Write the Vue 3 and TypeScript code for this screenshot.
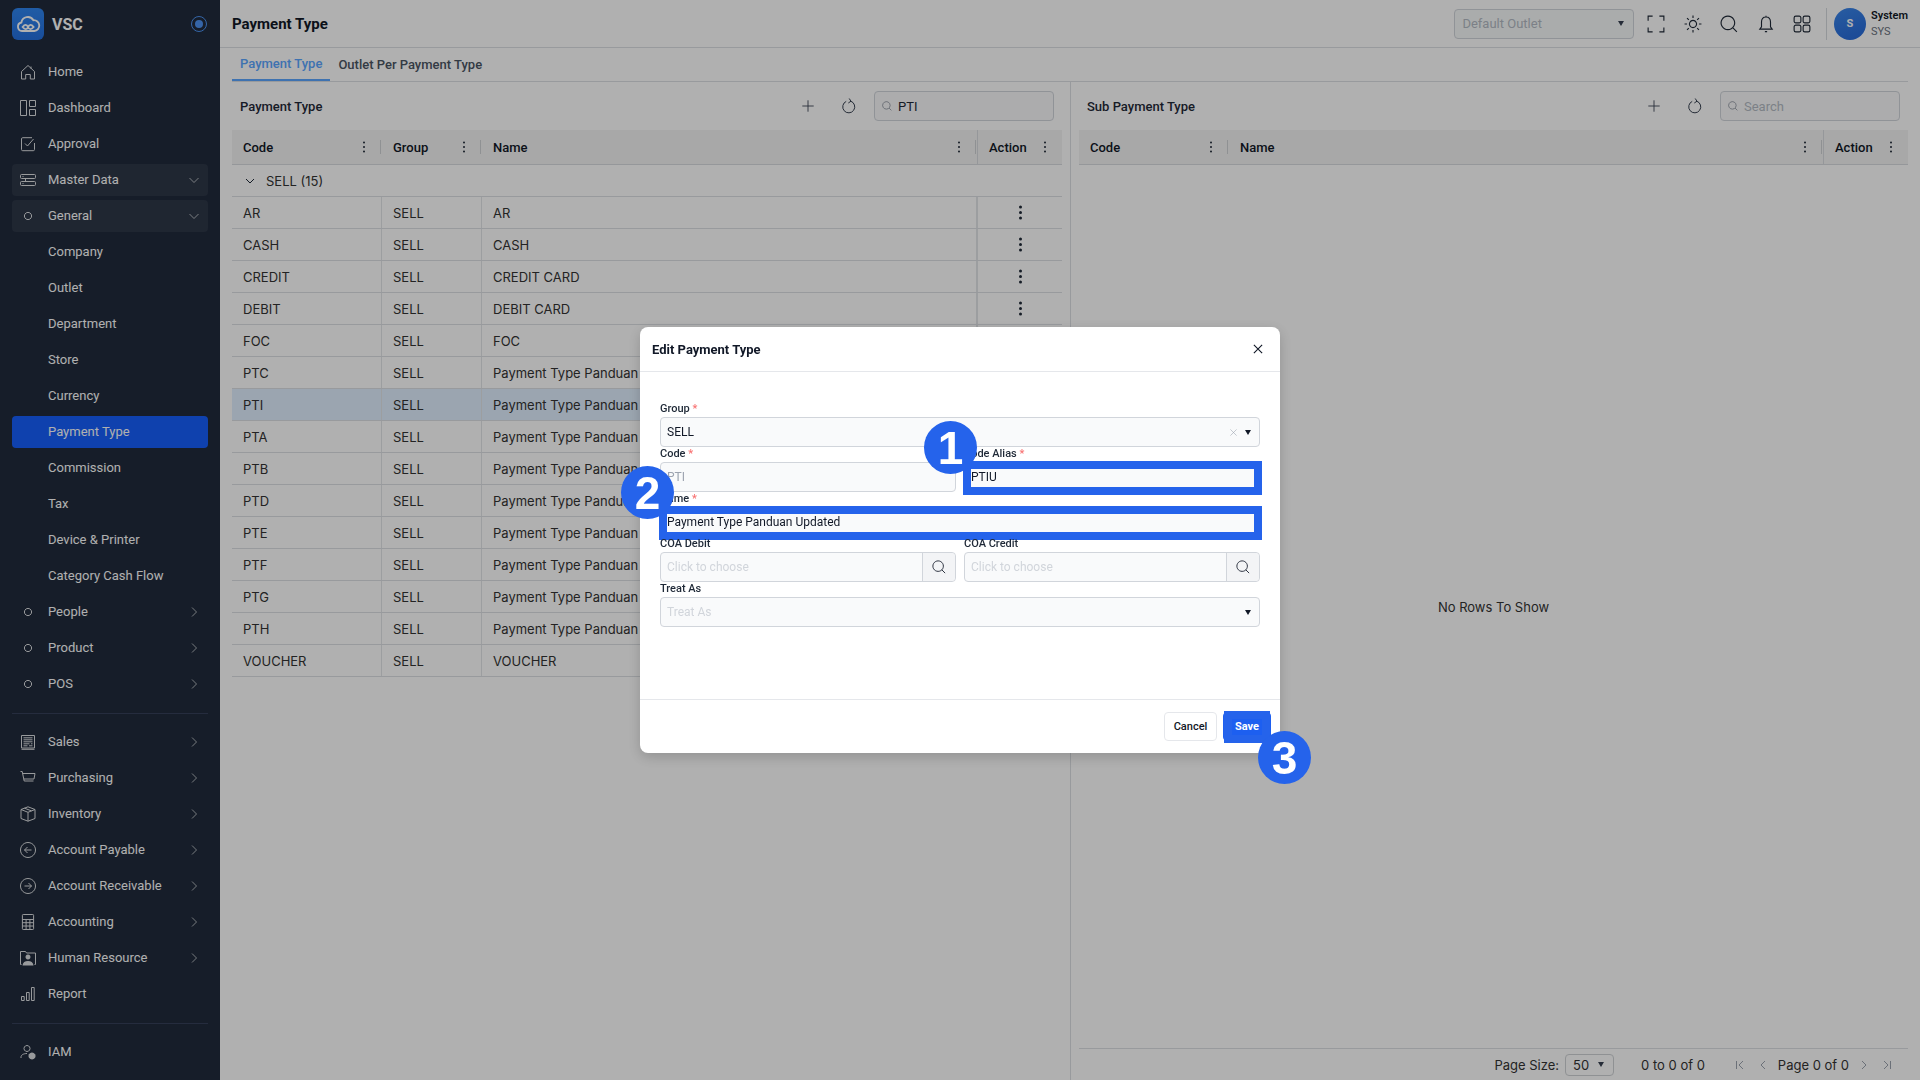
<script setup lang="ts">
type Icon = { d: string; f?: string }

const icons: Record<string, Icon> = {
  home: { d: 'M1.5 15V7.5L8 1.5l6.5 6V15h-4.2v-4.5H5.7V15zM11 2.5v2.2' },
  dashboard: { d: 'M.5.5h6v15h-6zM9.5.5h6v6h-6zM9.5 9.5h6v6h-6z' },
  approval: { d: 'M14.5 7v6.5a1.2 1.2 0 0 1-1.2 1.2H2.7a1.2 1.2 0 0 1-1.2-1.2V2.9a1.2 1.2 0 0 1 1.2-1.2H12M5 7.5l2.5 2.5L13.5 3' },
  server: { d: 'M1.5 2.500h13a1 1 0 0 1 1 1v2a1 1 0 0 1-1 1h-13a1 1 0 0 1-1-1v-2a1 1 0 0 1 1-1zM1.500 9.500h13a1 1 0 0 1 1 1v2a1 1 0 0 1-1 1h-13a1 1 0 0 1-1-1v-2a1 1 0 0 1 1-1zM2.500 4.500h1M2.500 11.500h1M5.500 6.500v3' },
  dot: { d: 'M8 4.400a3.600 3.600 0 1 0 .01 0z' },
  sales: { d: 'M1.500 1.500h13v12.500h-13zM1.500 15.300h13M3.500 3.800h9M3.500 5.800h9M3.500 7.800h9M3.500 9.800h6M11 9.800h1.500M3.500 11.800h4M9 11.800h3.500' },
  cart: { d: 'M.5 1.500h1.700l2 9.500h9.300M2.600 3.500h12.400l-1 5.500H3.800' , f: '' },
  box: { d: 'M8 .8l7 2.700v9L8 15.200l-7-2.700v-9zM1 3.500l7 2.800 7-2.800M8 6.300v8.900M4.500 2.200l7 2.700' },
  back: { d: 'M8 .5a7.500 7.500 0 1 0 .01 0zM11.500 8h-7M7.500 5L4.500 8l3 3' },
  forward: { d: 'M8 .5a7.500 7.500 0 1 0 .01 0zM4.500 8h7M8.500 5l3 3-3 3' },
  calc: { d: 'M3.200.5h9.600a.8.800 0 0 1 .8.800v13.400a.8.800 0 0 1-.8.800H3.200a.8.800 0 0 1-.8-.8V1.300a.8.800 0 0 1 .8-.8zM2.400 5.500h11.200M2.400 8.700h11.200M2.400 12h11.200M6.100 5.500v10M9.900 5.500v10' },
  person: {
    d: 'M.5 14.500V1.500h5l1 1.500h9v11.500M.5 14.500h1M15.500 14.500h-1',
    f: 'M8 4.600a2.500 2.500 0 1 1-.01 0zM2.500 15.500c.3-3.200 2.500-4.500 5.500-4.500s5.200 1.300 5.500 4.500z',
  },
  report: { d: 'M1.500 10.500h2.700v4H1.500zM6.500 6.500h2.700v8H6.500zM11.500 1.500h2.700v13h-2.700z' },
  iam: {
    d: 'M7 1.500a3 3 0 1 0 .01 0zM1 14v-1c0-2 2.500-3.500 6-3.500',
    f: 'M12 8.500a3.500 3.500 0 1 0 .01 0z',
  },
  tools: { d: 'M1 1l6 6M15 1L9 7M3 0v3H0' },
  plus: { d: 'M8 1.500v13M1.500 8h13' },
  refresh: { d: 'M9.800 3.200A6 6 0 1 1 5.200 3.400M8.200 .5l1.800 2.700-2.700 1.800' },
  search: { d: 'M7 1a6 6 0 1 0 .01 0zM11.300 11.300L15 15' },
  full: { d: 'M1 5V1h4M11 1h4v4M15 11v4h-4M5 15H1v-4' },
  sun: { d: 'M8 4.800a3.200 3.200 0 1 0 .01 0zM8 .5v2.200M8 13.300v2.200M.5 8h2.200M13.300 8h2.200M2.700 2.700l1.600 1.600M11.700 11.700l1.600 1.600M2.700 13.300l1.600-1.600M11.700 4.300l1.600-1.600' },
  bell: { d: 'M8 1.800c-2.700 0-4 2-4 4.500v4.200l-1.500 2h11l-1.500-2V6.300c0-2.500-1.300-4.500-4-4.500zM8 .6v1.200M7 14.800h2' },
  grid: { d: 'M2.500 1h3a1.500 1.500 0 0 1 1.500 1.500v3A1.500 1.500 0 0 1 5.500 7h-3A1.500 1.500 0 0 1 1 5.500v-3A1.500 1.500 0 0 1 2.500 1zM10.500 1h3A1.500 1.500 0 0 1 15 2.500v3A1.500 1.500 0 0 1 13.500 7h-3A1.500 1.500 0 0 1 9 5.500v-3A1.500 1.500 0 0 1 10.500 1zM2.500 9h3A1.500 1.500 0 0 1 7 10.500v3A1.500 1.500 0 0 1 5.500 15h-3A1.500 1.500 0 0 1 1 13.500v-3A1.500 1.500 0 0 1 2.500 9zM10.500 9h3a1.500 1.500 0 0 1 1.500 1.500v3a1.500 1.500 0 0 1-1.500 1.500h-3A1.500 1.500 0 0 1 9 13.500v-3A1.500 1.500 0 0 1 10.500 9z' },
  close: { d: 'M2.500 2.500l11 11M13.500 2.500l-11 11' },
}

type NavItem = { label: string; icon?: string; chev?: 'down' | 'right'; open?: boolean; active?: boolean }

const navGroups: NavItem[][] = [
  [
    { label: 'Home', icon: 'home' },
    { label: 'Dashboard', icon: 'dashboard' },
    { label: 'Approval', icon: 'approval' },
    { label: 'Master Data', icon: 'server', chev: 'down', open: true },
    { label: 'General', icon: 'dot', chev: 'down', open: true },
    { label: 'Company' },
    { label: 'Outlet' },
    { label: 'Department' },
    { label: 'Store' },
    { label: 'Currency' },
    { label: 'Payment Type', active: true },
    { label: 'Commission' },
    { label: 'Tax' },
    { label: 'Device & Printer' },
    { label: 'Category Cash Flow' },
    { label: 'People', icon: 'dot', chev: 'right' },
    { label: 'Product', icon: 'dot', chev: 'right' },
    { label: 'POS', icon: 'dot', chev: 'right' },
  ],
  [
    { label: 'Sales', icon: 'sales', chev: 'right' },
    { label: 'Purchasing', icon: 'cart', chev: 'right' },
    { label: 'Inventory', icon: 'box', chev: 'right' },
    { label: 'Account Payable', icon: 'back', chev: 'right' },
    { label: 'Account Receivable', icon: 'forward', chev: 'right' },
    { label: 'Accounting', icon: 'calc', chev: 'right' },
    { label: 'Human Resource', icon: 'person', chev: 'right' },
    { label: 'Report', icon: 'report' },
  ],
  [
    { label: 'IAM', icon: 'iam' },
    { label: '', icon: 'tools' },
  ],
]

const headerIcons = ['full', 'sun', 'search', 'bell', 'grid']

const rows = [
  ['AR', 'AR'],
  ['CASH', 'CASH'],
  ['CREDIT', 'CREDIT CARD'],
  ['DEBIT', 'DEBIT CARD'],
  ['FOC', 'FOC'],
  ['PTC', 'Payment Type Panduan'],
  ['PTI', 'Payment Type Panduan'],
  ['PTA', 'Payment Type Panduan Updated'],
  ['PTB', 'Payment Type Panduan Updated'],
  ['PTD', 'Payment Type Panduan Updated'],
  ['PTE', 'Payment Type Panduan Updated'],
  ['PTF', 'Payment Type Panduan Updated'],
  ['PTG', 'Payment Type Panduan Updated'],
  ['PTH', 'Payment Type Panduan Updated'],
  ['VOUCHER', 'VOUCHER'],
]
</script>

<template>
  <div class="app">
    <!-- Sidebar -->
    <aside class="sidebar">
      <div class="brand">
        <div class="logo">
          <svg viewBox="0 0 24 24" width="26" height="26" fill="none" stroke="#fff" stroke-width="1.700">
            <path d="M6.500 18.500a4 4 0 0 1-.6-7.900A6 6 0 0 1 17 8.500a5 5 0 0 1 .8 10H6.500z" />
            <path d="M7 14.800c2-2.600 4-2.600 5 0s3.200 2.600 5.200 0c-2-2.600-4-2.600-5.200 0s-3 2.600-5 0z" />
          </svg>
        </div>
        <span class="brand-name">VSC</span>
        <span class="pin"><span class="pin-dot"></span></span>
      </div>

      <nav class="nav">
        <template v-for="(group, g) in navGroups" :key="g">
          <div v-if="g > 0" class="nav-divider"></div>
          <a
            v-for="item in group"
            :key="item.label"
            class="nav-item"
            :class="{ open: item.open, active: item.active }"
          >
            <span class="nav-icon">
              <svg v-if="item.icon" viewBox="0 0 16 16" width="16" height="16">
                <path :d="icons[item.icon].d" fill="none" stroke="currentColor" />
                <path v-if="icons[item.icon].f" :d="icons[item.icon].f" fill="currentColor" />
              </svg>
            </span>
            <span class="nav-label">{{ item.label }}</span>
            <svg v-if="item.chev === 'down'" class="chev" viewBox="0 0 10 10" width="10" height="10">
              <path d="M.5 3l4.500 4.500L9.500 3" />
            </svg>
            <svg v-else-if="item.chev === 'right'" class="chev" viewBox="0 0 10 10" width="10" height="10">
              <path d="M3 .5L7.500 5 3 9.500" />
            </svg>
          </a>
        </template>
      </nav>
    </aside>

    <!-- Main -->
    <main class="main">
      <header class="topbar">
        <h1 class="page-title">Payment Type</h1>
        <div class="top-right">
          <div class="outlet-select">
            <span class="placeholder">Default Outlet</span>
            <span class="caret"></span>
          </div>
          <svg v-for="name in headerIcons" :key="name" class="top-icon" viewBox="0 0 16 16" width="18" height="18">
            <path :d="icons[name].d" />
          </svg>
          <span class="top-sep"></span>
          <span class="avatar">S</span>
          <span class="user">
            <b>System</b>
            <small>SYS</small>
          </span>
        </div>
      </header>

      <div class="tabs">
        <span class="tab active">Payment Type</span>
        <span class="tab">Outlet Per Payment Type</span>
      </div>

      <div class="panels">
        <!-- Payment type grid -->
        <section class="panel panel-left">
          <div class="toolbar">
            <span class="toolbar-title">Payment Type</span>
            <button class="tool-btn"><svg viewBox="0 0 16 16" width="14" height="14"><path :d="icons.plus.d" /></svg></button>
            <button class="tool-btn"><svg viewBox="0 0 16 16" width="16" height="16"><path :d="icons.refresh.d" /></svg></button>
            <div class="search-box">
              <svg viewBox="0 0 16 16" width="10" height="10"><path :d="icons.search.d" /></svg>
              <span>PTI</span>
            </div>
          </div>

          <div class="grid-head grid-cols-left">
            <div class="head-cell"><span>Code</span><i class="kebab"></i><i class="head-sep"></i></div>
            <div class="head-cell"><span>Group</span><i class="kebab"></i><i class="head-sep"></i></div>
            <div class="head-cell"><span>Name</span><i class="kebab"></i><i class="head-sep"></i></div>
            <div class="head-cell head-action"><span>Action</span><i class="kebab"></i></div>
          </div>

          <div class="group-row">
            <svg viewBox="0 0 10 10" width="10" height="10"><path d="M1 3l4 4 4-4" /></svg>
            <span>SELL (15)</span>
          </div>

          <div
            v-for="row in rows"
            :key="row[0]"
            class="grid-row grid-cols-left"
            :class="{ selected: row[0] === 'PTI' }"
          >
            <div class="cell">{{ row[0] }}</div>
            <div class="cell">SELL</div>
            <div class="cell">{{ row[1] }}</div>
            <div class="cell cell-action"><i class="kebab big"></i></div>
          </div>
        </section>

        <!-- Sub payment type grid -->
        <section class="panel panel-right">
          <div class="toolbar">
            <span class="toolbar-title">Sub Payment Type</span>
            <button class="tool-btn"><svg viewBox="0 0 16 16" width="14" height="14"><path :d="icons.plus.d" /></svg></button>
            <button class="tool-btn"><svg viewBox="0 0 16 16" width="16" height="16"><path :d="icons.refresh.d" /></svg></button>
            <div class="search-box">
              <svg viewBox="0 0 16 16" width="10" height="10"><path :d="icons.search.d" /></svg>
              <span class="placeholder">Search</span>
            </div>
          </div>

          <div class="grid-head grid-cols-right">
            <div class="head-cell"><span>Code</span><i class="kebab"></i><i class="head-sep"></i></div>
            <div class="head-cell"><span>Name</span><i class="kebab"></i><i class="head-sep"></i></div>
            <div class="head-cell head-action"><span>Action</span><i class="kebab"></i></div>
          </div>

          <div class="empty">No Rows To Show</div>

          <footer class="pager">
            <span>Page Size:</span>
            <span class="page-size">50<i class="caret"></i></span>
            <span class="page-range">0 to 0 of 0</span>
            <span class="page-nav">
              <svg viewBox="0 0 10 10" width="10" height="10"><path d="M1.500 1v8M8 1L4 5l4 4" /></svg>
              <svg viewBox="0 0 10 10" width="10" height="10"><path d="M7 1L3 5l4 4" /></svg>
            </span>
            <span class="page-num">Page 0 of 0</span>
            <span class="page-nav">
              <svg viewBox="0 0 10 10" width="10" height="10"><path d="M3 1l4 4-4 4" /></svg>
              <svg viewBox="0 0 10 10" width="10" height="10"><path d="M2 1l4 4-4 4M8.500 1v8" /></svg>
            </span>
          </footer>
        </section>
      </div>
    </main>

    <!-- Modal -->
    <div class="overlay">
      <div class="modal">
        <div class="modal-head">
          <span>Edit Payment Type</span>
          <svg viewBox="0 0 16 16" width="12" height="12"><path :d="icons.close.d" /></svg>
        </div>

        <form class="modal-body" @submit.prevent>
          <div class="field wide">
            <label>Group <em>*</em></label>
            <div class="input">
              <span>SELL</span>
              <svg class="clear" viewBox="0 0 16 16" width="9" height="9"><path :d="icons.close.d" /></svg>
              <i class="caret dark"></i>
            </div>
          </div>
          <div class="field">
            <label>Code <em>*</em></label>
            <div class="input"><span class="muted">PTI</span></div>
          </div>
          <div class="field">
            <label>Code Alias <em>*</em></label>
            <div class="input"><span>PTIU</span></div>
            <i class="mark"></i>
            <b class="badge badge-one">1</b>
          </div>
          <div class="field wide">
            <label>Name <em>*</em></label>
            <div class="input"><span>Payment Type Panduan Updated</span></div>
            <i class="mark"></i>
            <b class="badge badge-two">2</b>
          </div>
          <div class="field">
            <label>COA Debit</label>
            <div class="input has-btn">
              <span class="hint">Click to choose</span>
              <span class="input-btn"><svg viewBox="0 0 16 16" width="14" height="14"><path :d="icons.search.d" /></svg></span>
            </div>
          </div>
          <div class="field">
            <label>COA Credit</label>
            <div class="input has-btn">
              <span class="hint">Click to choose</span>
              <span class="input-btn"><svg viewBox="0 0 16 16" width="14" height="14"><path :d="icons.search.d" /></svg></span>
            </div>
          </div>
          <div class="field wide">
            <label>Treat As</label>
            <div class="input">
              <span class="hint">Treat As</span>
              <i class="caret dark"></i>
            </div>
          </div>
        </form>

        <div class="modal-foot">
          <button class="btn">Cancel</button>
          <button class="btn primary">
            Save
            <i class="mark mark-save"></i>
            <b class="badge badge-three">3</b>
          </button>
        </div>
      </div>
    </div>
  </div>
</template>

<style scoped>
.app {
  display: flex;
  height: 1080px;
  overflow: hidden;
  background: #fff;
  color: #1f2937;
  font-family: Roboto, "Liberation Sans", sans-serif;
  font-size: 13px;
}

/* Sidebar */
.sidebar {
  flex: 0 0 220px;
  height: 1080px;
  overflow: hidden;
  background: #202b3c;
  color: #fff;
}
.brand {
  display: flex;
  align-items: center;
  height: 32px;
  padding: 8px 13px 0 12px;
}
.logo {
  display: flex;
  align-items: center;
  justify-content: center;
  width: 32px;
  height: 32px;
  border-radius: 6px;
  background: linear-gradient(180deg, #2f86f0, #2470e0);
}
.brand-name {
  margin-left: 8px;
  font-size: 16px;
  font-weight: 700;
}
.pin {
  display: flex;
  align-items: center;
  justify-content: center;
  width: 16px;
  height: 16px;
  margin-left: auto;
  border: 1px solid #4d93f2;
  border-radius: 50%;
  box-sizing: border-box;
}
.pin-dot {
  width: 8px;
  height: 8px;
  border-radius: 50%;
  background: #4d93f2;
}
.nav {
  display: flex;
  flex-direction: column;
  gap: 4px;
  padding: 15.5px 12px 0;
}
.nav-item {
  display: flex;
  flex: 0 0 32px;
  align-items: center;
  height: 32px;
  padding: 0 9px 0 8px;
  border-radius: 4px;
}
.nav-item.open {
  background: #2d3748;
}
.nav-item.active {
  background: #165ffc;
}
.nav-icon {
  display: flex;
  flex: 0 0 16px;
  width: 16px;
  height: 16px;
  margin-right: 12px;
  opacity: 0.85;
}
.nav-label {
  flex: 1;
  white-space: nowrap;
}
.chev {
  fill: none;
  stroke: #fff;
  stroke-width: 0.8;
  opacity: 0.8;
}
.nav-divider {
  flex: 0 0 1px;
  margin: 9px 0 8px;
  background: #36415a;
}

/* Top bar */
.main {
  display: flex;
  flex: 1;
  flex-direction: column;
  min-width: 0;
}
.topbar {
  display: flex;
  flex: 0 0 47px;
  align-items: center;
  justify-content: space-between;
  padding: 0 12px;
  border-bottom: 1px solid #dde0e4;
}
.page-title {
  margin: 0;
  font-size: 15px;
  font-weight: 700;
  color: #111827;
}
.top-right {
  display: flex;
  align-items: center;
}
.outlet-select {
  display: flex;
  align-items: center;
  justify-content: space-between;
  box-sizing: border-box;
  width: 180px;
  height: 30px;
  margin-right: 13px;
  padding: 0 9px 0 7px;
  border: 1px solid #d1d5db;
  border-radius: 4px;
  background: #f7fafa;
}
.placeholder {
  color: #b4bac4;
}
.top-icon {
  flex: 0 0 18px;
  margin-right: 18.400px;
  fill: none;
  stroke: #1f2937;
}
.top-icon:last-of-type {
  margin-right: 15px;
}
.top-sep {
  width: 1px;
  height: 32px;
  margin-right: 7px;
  background: #d6d9de;
}
.avatar {
  display: flex;
  align-items: center;
  justify-content: center;
  width: 32px;
  height: 32px;
  border-radius: 50%;
  background: linear-gradient(160deg, #3a86ea, #2668d8);
  color: #fff;
  font-size: 11px;
  font-weight: 700;
}
.user {
  display: flex;
  flex-direction: column;
  gap: 3px;
  margin-left: 5px;
  font-size: 11px;
  line-height: 13px;
}
.user b {
  font-weight: 600;
  color: #111827;
}
.user small {
  font-size: 11px;
  color: #6b7280;
}

/* Tabs */
.tabs {
  display: flex;
  flex: 0 0 33px;
  box-sizing: border-box;
  margin: 0 12px;
  border-bottom: 1px solid #dde0e4;
}
.tab {
  display: flex;
  align-items: center;
  height: 33px;
  box-sizing: border-box;
  padding: 0 8px;
  font-weight: 500;
  color: #4b5563;
  white-space: nowrap;
}
.tab + .tab {
  padding-left: 8px;
}
.tab.active {
  border-bottom: 2px solid #5ba6ff;
  color: #5ba6ff;
}

/* Panels */
.panels {
  display: flex;
  flex: 1;
  min-height: 0;
  margin: 0 12px;
}
.panel {
  display: flex;
  flex-direction: column;
  box-sizing: border-box;
}
.panel-left {
  flex: 0 0 839px;
  padding-right: 8px;
  border-right: 1px solid #dde0e4;
}
.panel-right {
  flex: 1;
  min-width: 0;
  padding-left: 8px;
}
.toolbar {
  display: flex;
  flex: 0 0 48px;
  align-items: center;
  padding: 0 8px;
}
.toolbar-title {
  margin-right: auto;
  font-weight: 500;
}
.tool-btn {
  display: flex;
  align-items: center;
  justify-content: center;
  width: 41px;
  height: 30px;
  padding: 0;
  border: 0;
  background: none;
}
.tool-btn svg {
  fill: none;
  stroke: #374151;
}
.search-box {
  display: flex;
  align-items: center;
  gap: 6px;
  box-sizing: border-box;
  width: 180px;
  height: 30px;
  margin-left: 4.500px;
  padding: 0 7px;
  border: 1px solid #d1d5db;
  border-radius: 4px;
  background: #f9fafb;
}
.search-box svg {
  fill: none;
  stroke: #6b7280;
}

/* Grids */
.grid-cols-left {
  display: grid;
  grid-template-columns: 150px 100px 495px 85px;
}
.grid-cols-right {
  display: grid;
  grid-template-columns: 150px 594px 85px;
}
.grid-head {
  flex: 0 0 35px;
  height: 35px;
  box-sizing: border-box;
  border-bottom: 1px solid #d8dbdf;
  background: #f3f3f3;
  font-weight: 500;
  color: #111827;
}
.head-cell {
  display: flex;
  align-items: center;
  padding: 0 1px 0 11px;
}
.head-cell span {
  margin-right: auto;
}
.head-action {
  padding-right: 16px;
  border-left: 1px solid #d8dbdf;
}
.kebab {
  position: relative;
  width: 2px;
  height: 2px;
  border-radius: 50%;
  background: #1f2937;
  box-shadow: 0 -4.500px 0 #1f2937, 0 4.500px 0 #1f2937;
}
.kebab.big {
  width: 3px;
  height: 3px;
  box-shadow: 0 -5.500px 0 #1f2937, 0 5.500px 0 #1f2937;
}
.head-sep {
  width: 1px;
  height: 14px;
  margin-left: 15px;
  background: #cfd2d6;
}
.group-row {
  display: flex;
  flex: 0 0 32px;
  align-items: center;
  gap: 11px;
  box-sizing: border-box;
  height: 32px;
  padding-left: 13px;
  border-bottom: 1px solid #dde0e4;
  font-family: Inter, "Liberation Sans", sans-serif;
  color: #333;
}
.group-row svg {
  fill: none;
  stroke: #1f2937;
}
.grid-row {
  flex: 0 0 32px;
  height: 32px;
  box-sizing: border-box;
  border-bottom: 1px solid #dde0e4;
  font-family: Inter, "Liberation Sans", sans-serif;
  color: #333;
}
.grid-row.selected {
  background: #e1f0ff;
}
.cell {
  display: flex;
  align-items: center;
  padding-left: 11px;
  border-right: 1px solid #e3e5e8;
  white-space: nowrap;
  overflow: hidden;
}
.cell-action {
  justify-content: center;
  padding: 0;
  border-right: 0;
  border-left: 1px solid #e3e5e8;
}
.empty {
  display: flex;
  flex: 1;
  align-items: center;
  justify-content: center;
  font-family: Inter, "Liberation Sans", sans-serif;
  color: #333;
}
.pager {
  display: flex;
  flex: 0 0 32px;
  align-items: center;
  justify-content: flex-end;
  box-sizing: border-box;
  padding-right: 16px;
  border-top: 1px solid #dde0e4;
  font-family: Inter, "Liberation Sans", sans-serif;
  color: #333;
}
.page-size {
  display: flex;
  align-items: center;
  justify-content: space-between;
  box-sizing: border-box;
  width: 49px;
  height: 22px;
  margin-left: 6px;
  padding: 0 9px 0 7px;
  border: 1px solid #cfd2d6;
  border-radius: 4px;
}
.page-range {
  margin: 0 30px 0 27px;
}
.page-nav {
  display: flex;
  gap: 13px;
}
.page-nav svg {
  fill: none;
  stroke: #9ca3af;
}
.page-num {
  margin: 0 10px;
}
.caret {
  width: 0;
  height: 0;
  border-top: 5px solid #374151;
  border-right: 3.500px solid transparent;
  border-left: 3.500px solid transparent;
}

/* Modal */
.overlay {
  position: fixed;
  inset: 0;
  z-index: 10;
  background: rgba(0, 0, 0, 0.31);
}
.modal {
  position: absolute;
  top: 327px;
  left: 640px;
  width: 640px;
  height: 426px;
  display: flex;
  flex-direction: column;
  border-radius: 8px;
  background: #fff;
  box-shadow: 0 4px 14px rgba(0, 0, 0, 0.18);
}
.modal-head {
  display: flex;
  flex: 0 0 44px;
  align-items: center;
  justify-content: space-between;
  padding: 0 16px 0 12px;
  border-bottom: 1px solid #e5e7eb;
  font-weight: 700;
  color: #111827;
}
.modal-head svg {
  fill: none;
  stroke: #111827;
  stroke-width: 1.500;
}
.modal-body {
  display: grid;
  flex: 1;
  grid-template-columns: 296px 296px;
  grid-auto-rows: 45px;
  align-content: start;
  column-gap: 8px;
  padding: 30px 20px 0;
}
.field {
  position: relative;
}
.field.wide {
  grid-column: 1 / 3;
}
.field label {
  display: block;
  height: 15px;
  font-size: 11px;
  font-weight: 500;
  line-height: 14px;
  color: #1f2937;
}
.field em {
  font-style: normal;
  color: #f87171;
}
.input {
  display: flex;
  align-items: center;
  box-sizing: border-box;
  height: 30px;
  padding-left: 6px;
  border: 1px solid #d1d5db;
  border-radius: 4px;
  background: #f9fafb;
  font-size: 12px;
  color: #111827;
}
.input .muted {
  color: #9ca3af;
}
.input .hint {
  color: #d1d5db;
}
.input .caret.dark,
.input .clear {
  flex: none;
}
.input .clear {
  margin-left: auto;
  margin-right: 7px;
  fill: none;
  stroke: #9ca3af;
}
.input .caret.dark {
  margin-right: 8px;
  border-top-color: #111827;
}
.input .hint + .caret {
  margin-left: auto;
}
.has-btn {
  justify-content: space-between;
  padding-right: 0;
}
.input-btn {
  display: flex;
  align-items: center;
  justify-content: center;
  box-sizing: border-box;
  width: 33px;
  height: 28px;
  border-left: 1px solid #d1d5db;
  border-radius: 0 4px 4px 0;
  background: #f3f4f6;
}
.input-btn svg {
  fill: none;
  stroke: #111827;
}

/* Tutorial annotations */
.mark {
  position: absolute;
  top: 14px;
  right: -2px;
  bottom: -3px;
  left: -1px;
  border: 8px solid #2563eb;
}
.mark-save {
  top: -2px;
  right: 0;
  bottom: -3px;
  left: 0;
}
.badge {
  position: absolute;
  z-index: 2;
  display: flex;
  align-items: center;
  justify-content: center;
  width: 53px;
  height: 53px;
  border-radius: 50%;
  background: #2563eb;
  color: #fff;
  font-family: "Liberation Sans", sans-serif;
  font-size: 46px;
  font-weight: 700;
}
.badge-one {
  top: -26px;
  left: -40px;
}
.badge-two {
  top: -26px;
  left: -39px;
}
.badge-three {
  top: 18px;
  left: 34px;
}
.modal-foot {
  display: flex;
  flex: 0 0 54px;
  align-items: flex-start;
  justify-content: flex-end;
  gap: 6px;
  box-sizing: border-box;
  padding: 12px 9px 0 0;
  border-top: 1px solid #e5e7eb;
}
.btn {
  position: relative;
  box-sizing: border-box;
  width: 53px;
  height: 29px;
  padding: 0;
  border: 1px solid #e5e7eb;
  border-radius: 4px;
  background: #fff;
  font-family: inherit;
  font-size: 11px;
  font-weight: 500;
  color: #111827;
}
.btn.primary {
  width: 48px;
  border-color: #1d5ff0;
  background: #1d5ff0;
  font-weight: 700;
  color: #fff;
}
</style>

<style>
html,
body {
  margin: 0;
  overflow: hidden;
}
</style>
